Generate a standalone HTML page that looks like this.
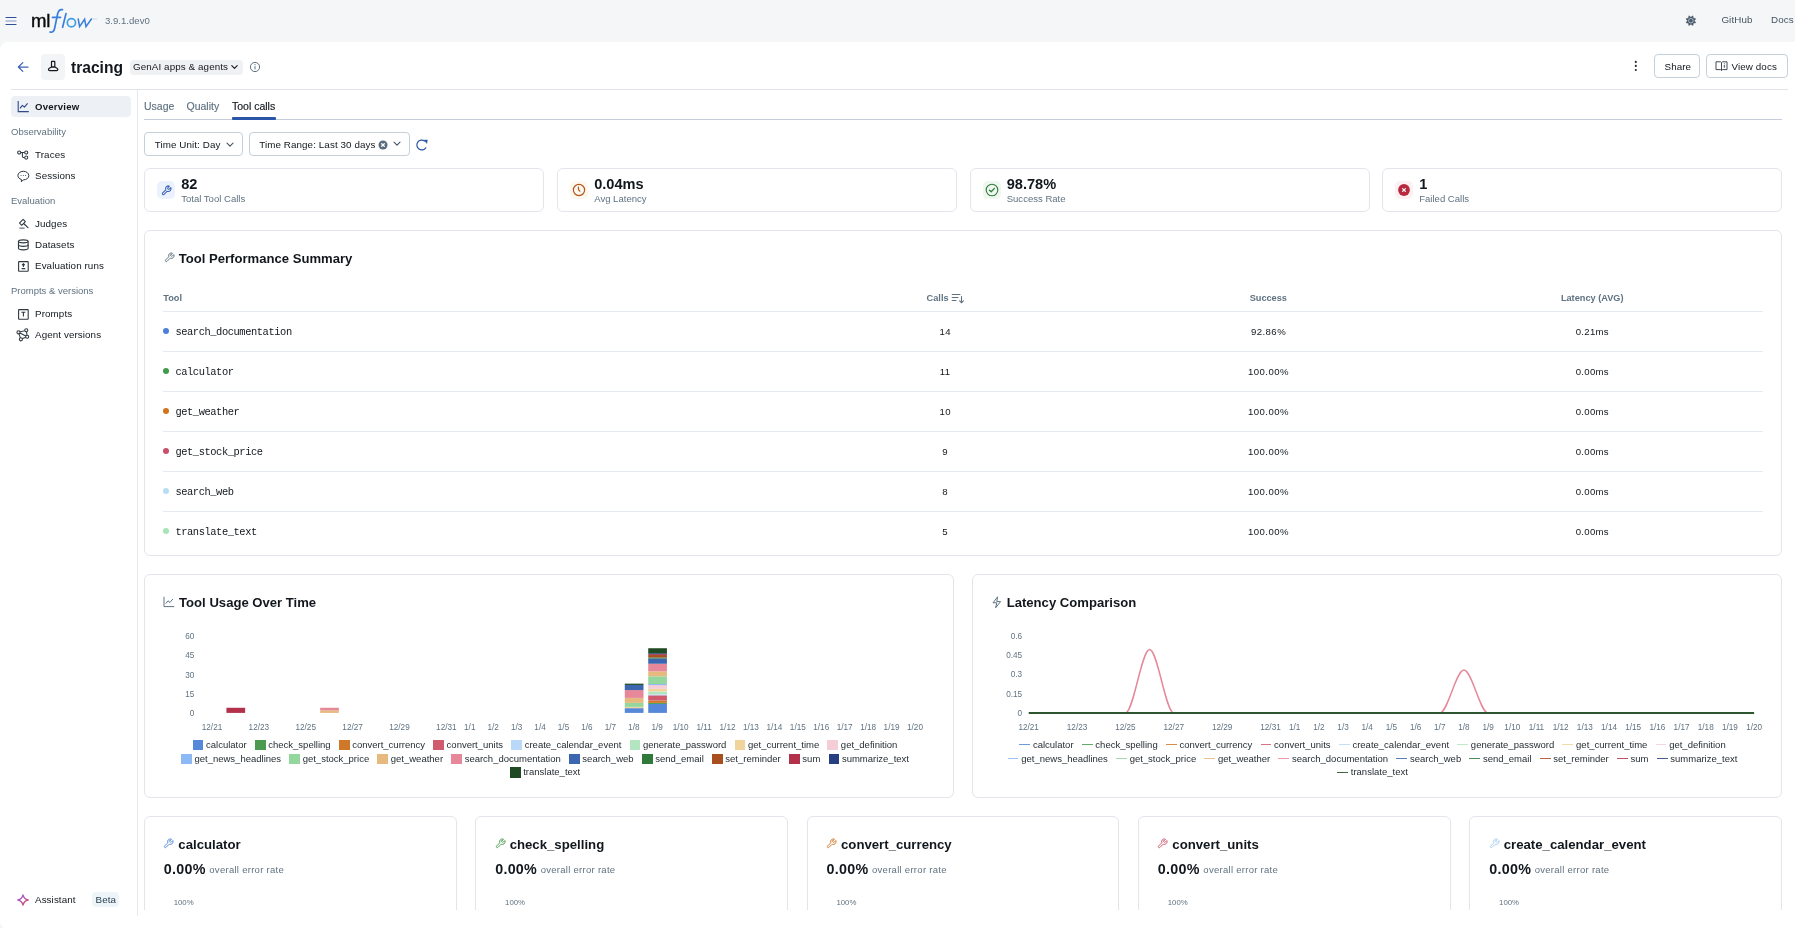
<!DOCTYPE html>
<html><head><meta charset="utf-8">
<style>
*{box-sizing:border-box;margin:0;padding:0}
html,body{width:1795px;height:928px;overflow:hidden}
body{background:#f5f6f8;font-family:"Liberation Sans",sans-serif;color:#11171c}
#root{position:absolute;left:0;top:0;width:1795px;height:928px;background:#f5f6f8;will-change:transform;overflow:hidden}
.a{position:absolute;white-space:nowrap}
svg{position:absolute;overflow:visible}
</style></head><body><div id="root">
<svg style="left:0px;top:0px" width="100" height="42"><g stroke="#2f4f9a" stroke-width="1.2" stroke-linecap="round"><line x1="6" y1="17.5" x2="16" y2="17.5"/><line x1="6" y1="21" x2="16" y2="21" stroke="#8296c6"/><line x1="6" y1="24.5" x2="16" y2="24.5"/></g></svg>
<div class="a" style="left:31.00px;top:8.97px;font-size:18.6px;line-height:24.18px;color:#0b0b0b;letter-spacing:-0.200px;-webkit-text-stroke:0.4px #0b0b0b">ml</div>
<svg style="left:0px;top:0px" width="100" height="42"><g fill="none" stroke="#3a7fdc" stroke-width="1.7" stroke-linecap="round">
<path d="M62.5 9.6 C59.5 9.2 58.2 11 57.6 14 L54.6 28.5 C54 31.5 52.5 32.6 50 32"/>
<line x1="52.5" y1="17.4" x2="60.5" y2="17.4"/>
<line x1="66" y1="13.6" x2="62.6" y2="27.3"/>
<circle cx="71.4" cy="22.8" r="4.1" stroke="#3f9fe6"/>
<path d="M78.2 19 L79.6 26.6 L84.6 19.2 L86 26.6 L91.4 19" stroke-width="1.55"/></g>
<path d="M92.6 19 h2.6 M95.5 19 h1.4" stroke="#9cc" stroke-width="0.6"/></svg>
<div class="a" style="left:105.00px;top:14.73px;font-size:9.6px;line-height:12.48px;color:#5f7281">3.9.1.dev0</div>
<svg style="left:1680px;top:12px" width="22" height="18"><g transform="translate(10.9,8.7)"><path d="M2.03 -4.90 L2.47 -2.47 L4.90 -2.03 L3.50 0.00 L4.90 2.03 L2.47 2.47 L2.03 4.90 L0.00 3.50 L-2.03 4.90 L-2.47 2.47 L-4.90 2.03 L-3.50 0.00 L-4.90 -2.03 L-2.47 -2.47 L-2.03 -4.90 L-0.00 -3.50 Z" fill="#4a5a6b" stroke="#4a5a6b" stroke-width="0.5" stroke-linejoin="round"/><circle r="2.3" fill="none" stroke="#c9d0d8" stroke-width="0.8"/><circle r="1.1" fill="#4a5a6b"/></g></svg>
<div class="a" style="left:1721.40px;top:14.03px;font-size:9.8px;line-height:12.74px;color:#445461;letter-spacing:0.104px">GitHub</div>
<div class="a" style="left:1771.00px;top:14.03px;font-size:9.8px;line-height:12.74px;color:#445461;letter-spacing:0.117px">Docs</div>
<div class="a" style="left:0;top:42px;width:1795px;height:887px;background:#fff;border-radius:8px 0 0 8px"></div>
<svg style="left:17px;top:61px" width="12" height="12"><path d="M11 6 H1.5 M5.8 1.6 L1.4 6 L5.8 10.4" fill="none" stroke="#3d64b0" stroke-width="1.25" stroke-linecap="round" stroke-linejoin="round"/></svg>
<div class="a" style="left:41px;top:54px;width:24px;height:26px;background:#f3f4f6;border-radius:4px"></div>
<svg style="left:44px;top:56px" width="16" height="18"><g fill="none" stroke="#11171c" stroke-width="1.2" stroke-linejoin="round"><rect x="7.5" y="5.3" width="3.3" height="5.7" rx="0.5"/><path d="M7.5 11 L5.3 12.2 C4 12.9 4.2 14.6 5.7 14.6 H12.6 C14.1 14.6 14.3 12.9 13 12.2 L10.8 11 Z"/></g></svg>
<div class="a" style="left:71.20px;top:57.06px;font-size:16.6px;line-height:21.58px;color:#11171c;font-weight:700;transform:scaleX(0.94);transform-origin:0 0">tracing</div>
<div class="a" style="left:130px;top:60px;width:113px;height:15px;background:#f0f1f3;border-radius:4px"></div>
<div class="a" style="left:133.00px;top:60.63px;font-size:9.8px;line-height:12.74px;color:#11171c;letter-spacing:0.102px">GenAI apps &amp; agents</div>
<svg style="left:230px;top:63px" width="10" height="8"><path d="M1.8 2.6 L4.5 5.3 L7.2 2.6" fill="none" stroke="#11171c" stroke-width="1.1" stroke-linecap="round" stroke-linejoin="round"/></svg>
<svg style="left:249px;top:61px" width="12" height="12"><circle cx="6" cy="6" r="4.6" fill="none" stroke="#5f7281" stroke-width="1"/><path d="M6 5.2 V8.4" stroke="#5f7281" stroke-width="1"/><circle cx="6" cy="3.7" r="0.6" fill="#5f7281"/></svg>
<svg style="left:1632px;top:59px" width="8" height="16"><g fill="#1f272d"><circle cx="3.8" cy="2.9" r="1.05"/><circle cx="3.8" cy="6.9" r="1.05"/><circle cx="3.8" cy="11" r="1.05"/></g></svg>
<div class="a" style="left:1654px;top:54.2px;width:46px;height:23.4px;border:1px solid #c4d0da;border-radius:4px;background:#fff"></div>
<div class="a" style="left:1664.50px;top:60.53px;font-size:9.8px;line-height:12.74px;color:#11171c;letter-spacing:0.106px">Share</div>
<div class="a" style="left:1706px;top:54.2px;width:82px;height:23.4px;border:1px solid #c4d0da;border-radius:4px;background:#fff"></div>
<svg style="left:1715px;top:60px" width="14" height="12"><g fill="none" stroke="#2f3941" stroke-width="0.9"><path d="M1 1.8 H5.5 L6.5 2.6 L7.5 1.8 H12 V9.6 H7.5 L6.5 10.4 L5.5 9.6 H1 Z"/><path d="M6.5 2.6 V10.4"/><path d="M9.3 5 V7.8"/></g><circle cx="9.3" cy="3.7" r="0.5" fill="#2f3941"/></svg>
<div class="a" style="left:1731.50px;top:60.53px;font-size:9.8px;line-height:12.74px;color:#11171c;letter-spacing:0.102px">View docs</div>
<div class="a" style="left:11px;top:89px;width:1777px;height:1px;background:#e0e4e9"></div>
<div class="a" style="left:137px;top:90px;width:1px;height:826px;background:#e4e9ef"></div>
<div class="a" style="left:11px;top:96px;width:120px;height:21px;background:#edf1f6;border-radius:4px"></div>
<svg style="left:17px;top:100px" width="13" height="13"><path d="M1.2 1 V11.6 H11.8" fill="none" stroke="#2f4a8a" stroke-width="1.1"/><path d="M3 8.4 L5.4 5.4 L7.4 7.2 L10.6 3.4" fill="none" stroke="#2f4a8a" stroke-width="1.1" stroke-linejoin="round"/></svg>
<div class="a" style="left:35.00px;top:100.63px;font-size:9.6px;line-height:12.48px;color:#11171c;font-weight:700;letter-spacing:0.227px">Overview</div>
<div class="a" style="left:11.00px;top:126.23px;font-size:9.5px;line-height:12.35px;color:#5f7281">Observability</div>
<div class="a" style="left:11.00px;top:195.13px;font-size:9.5px;line-height:12.35px;color:#5f7281">Evaluation</div>
<div class="a" style="left:11.00px;top:285.33px;font-size:9.5px;line-height:12.35px;color:#5f7281">Prompts &amp; versions</div>
<div class="a" style="left:35.00px;top:149.03px;font-size:9.8px;line-height:12.74px;color:#11171c;letter-spacing:0.104px">Traces</div>
<div class="a" style="left:35.00px;top:170.23px;font-size:9.8px;line-height:12.74px;color:#11171c;letter-spacing:0.102px">Sessions</div>
<div class="a" style="left:35.00px;top:218.23px;font-size:9.8px;line-height:12.74px;color:#11171c;letter-spacing:0.109px">Judges</div>
<div class="a" style="left:35.00px;top:239.23px;font-size:9.8px;line-height:12.74px;color:#11171c;letter-spacing:0.100px">Datasets</div>
<div class="a" style="left:35.00px;top:260.23px;font-size:9.8px;line-height:12.74px;color:#11171c;letter-spacing:0.094px">Evaluation runs</div>
<div class="a" style="left:35.00px;top:308.23px;font-size:9.8px;line-height:12.74px;color:#11171c;letter-spacing:0.107px">Prompts</div>
<div class="a" style="left:35.00px;top:329.23px;font-size:9.8px;line-height:12.74px;color:#11171c;letter-spacing:0.096px">Agent versions</div>
<svg style="left:16px;top:148px" width="14" height="13"><g fill="none" stroke="#2f3941" stroke-width="1.05"><circle cx="3.2" cy="4.5" r="1.55"/><circle cx="10.2" cy="4.5" r="1.55"/><circle cx="10.2" cy="9.6" r="1.55"/><path d="M4.8 4.5 H8.6 M6.4 4.5 V8.4 Q6.4 9.6 8.6 9.6"/></g></svg>
<svg style="left:17px;top:170px" width="13" height="13"><path d="M6.3 1.3 C9.5 1.3 11.8 3.2 11.8 5.6 C11.8 8 9.5 9.9 6.3 9.9 L4.4 11.8 V9.5 C2.3 8.8 0.9 7.4 0.9 5.6 C0.9 3.2 3.2 1.3 6.3 1.3 Z" fill="none" stroke="#2f3941" stroke-width="1"/><g fill="#2f3941"><circle cx="4" cy="5.6" r="0.5"/><circle cx="6.3" cy="5.6" r="0.5"/><circle cx="8.6" cy="5.6" r="0.5"/></g></svg>
<svg style="left:12px;top:215px" width="22" height="18"><g fill="none" stroke="#2f3941" stroke-linecap="round"><path d="M11.6 8.5 L16 12.6" stroke-width="1.15"/><rect x="-2.6" y="-1.6" width="5.2" height="3.2" rx="0.3" transform="translate(10.4 7.3) rotate(-45)" stroke-width="1.1"/><path d="M7.4 13.2 H12.6" stroke="#8a96a3" stroke-width="1.7" stroke-linecap="butt"/></g></svg>
<svg style="left:17px;top:238px" width="13" height="13"><g fill="none" stroke="#2f3941" stroke-width="1.15"><ellipse cx="6.3" cy="3.3" rx="4.8" ry="1.5"/><path d="M1.5 3.3 V10.3 C1.5 11.2 3.7 11.8 6.3 11.8 C8.9 11.8 11.1 11.2 11.1 10.3 V3.3"/><path d="M1.5 6.8 C1.5 7.7 3.7 8.3 6.3 8.3 C8.9 8.3 11.1 7.7 11.1 6.8"/></g></svg>
<svg style="left:17px;top:260px" width="13" height="13"><g fill="none" stroke="#2f3941" stroke-width="1.1"><rect x="1.6" y="1.6" width="9.6" height="9.6" rx="0.4"/><path d="M6.4 3.8 V6.9 M5 5.1 L6.4 3.8 L7.8 5.1 M4.6 8.6 H8.2"/></g></svg>
<svg style="left:17px;top:307.5px" width="13" height="13"><g fill="none" stroke="#2f3941" stroke-width="1.1"><rect x="1.6" y="1.6" width="9.6" height="9.6" rx="0.4"/><path d="M4.4 4.3 H8.4 M6.4 4.3 V8.6"/></g></svg>
<svg style="left:12px;top:322px" width="22" height="24"><g stroke="#2f3941" stroke-width="1.05"><path d="M6.5 10.3 L14.3 8.3 L15.2 14.7 L8.9 17.3 Z M6.5 10.3 L15.2 14.7" fill="none"/><g fill="#fff"><circle cx="6.5" cy="10.3" r="1.55"/><circle cx="14.3" cy="8.3" r="1.55"/><circle cx="15.2" cy="14.7" r="1.55"/><circle cx="8.9" cy="17.3" r="1.55"/></g></g></svg>
<svg style="left:17px;top:894px" width="12" height="12"><defs><linearGradient id="ag" x1="0" y1="0" x2="1" y2="1"><stop offset="0" stop-color="#8b5cf6"/><stop offset="1" stop-color="#e5484d"/></linearGradient></defs><path d="M6 0.8 Q6.9 5.1 11.2 6 Q6.9 6.9 6 11.2 Q5.1 6.9 0.8 6 Q5.1 5.1 6 0.8 Z" fill="none" stroke="url(#ag)" stroke-width="1.3" stroke-linejoin="round"/></svg>
<div class="a" style="left:35.00px;top:893.63px;font-size:9.8px;line-height:12.74px;color:#11171c;letter-spacing:0.092px">Assistant</div>
<div class="a" style="left:92px;top:892px;width:27px;height:15px;background:#eef5f9;border-radius:4px"></div>
<div class="a" style="left:95.60px;top:893.63px;font-size:9.8px;line-height:12.74px;color:#1f3a4d;letter-spacing:0.105px">Beta</div>
<div class="a" style="left:144px;top:119px;width:1638px;height:1px;background:#c5ced8"></div>
<div class="a" style="left:232px;top:117px;width:44px;height:2.5px;background:#2a55a8;border-radius:1px"></div>
<div class="a" style="left:144.00px;top:100.44px;font-size:10.5px;line-height:13.65px;color:#5f7281;-webkit-text-stroke:0.15px #5f7281">Usage</div>
<div class="a" style="left:186.50px;top:100.44px;font-size:10.5px;line-height:13.65px;color:#5f7281;-webkit-text-stroke:0.15px #5f7281">Quality</div>
<div class="a" style="left:232.00px;top:100.44px;font-size:10.5px;line-height:13.65px;color:#11171c;-webkit-text-stroke:0.15px #11171c">Tool calls</div>
<div class="a" style="left:144px;top:132px;width:99px;height:24px;border:1px solid #c4d0da;border-radius:4px;background:#fff"></div>
<div class="a" style="left:154.70px;top:138.63px;font-size:9.8px;line-height:12.74px;color:#11171c;letter-spacing:0.096px">Time Unit: Day</div>
<svg style="left:226px;top:141.5px" width="8" height="6"><path d="M1 1.2 L4 4.2 L7 1.2" fill="none" stroke="#445461" stroke-width="1.1" stroke-linecap="round" stroke-linejoin="round"/></svg>
<div class="a" style="left:249px;top:132px;width:161px;height:24px;border:1px solid #c4d0da;border-radius:4px;background:#fff"></div>
<div class="a" style="left:259.20px;top:138.63px;font-size:9.8px;line-height:12.74px;color:#11171c;letter-spacing:0.098px">Time Range: Last 30 days</div>
<svg style="left:378.4px;top:139.8px" width="10" height="10"><circle cx="5" cy="5" r="4.5" fill="#5a6b7c"/><path d="M3.7 3.7 L6.3 6.3 M6.3 3.7 L3.7 6.3" stroke="#fff" stroke-width="1.3" stroke-linecap="round"/></svg>
<svg style="left:393px;top:141.1px" width="8" height="6"><path d="M1 1.2 L4 4.2 L7 1.2" fill="none" stroke="#445461" stroke-width="1.1" stroke-linecap="round" stroke-linejoin="round"/></svg>
<svg style="left:416px;top:138.8px" width="14" height="12"><path d="M9.8 8.8 A4.9 4.9 0 1 1 8.6 2.0" fill="none" stroke="#2a55a8" stroke-width="1.2" stroke-linecap="round"/><path d="M7.9 1.1 L11.4 0.9 L10.9 4.5 Z" fill="#2a55a8" stroke="#2a55a8" stroke-width="0.4" stroke-linejoin="round"/></svg>
<div class="a" style="left:144px;top:168px;width:400px;height:44px;border:1px solid #e2e6ec;border-radius:6px;background:#fff"></div>
<div class="a" style="left:157px;top:181px;width:18px;height:18px;background:#ecf2fd;border-radius:5px"></div>
<svg style="left:160.6px;top:184.6px" width="11" height="11" viewBox="0 0 24 24"><path d="M14.7 6.3a1 1 0 0 0 0 1.4l1.6 1.6a1 1 0 0 0 1.4 0l3.77-3.77a6 6 0 0 1-7.94 7.94l-6.91 6.91a2.12 2.12 0 0 1-3-3l6.91-6.91a6 6 0 0 1 7.94-7.94l-3.76 3.76z" fill="none" stroke="#3a62b4" stroke-width="2.2" stroke-linecap="round" stroke-linejoin="round"/></svg>
<div class="a" style="left:181.20px;top:175.45px;font-size:14.6px;line-height:18.98px;color:#11171c;font-weight:700">82</div>
<div class="a" style="left:181.20px;top:193.08px;font-size:9.55px;line-height:12.42px;color:#5f7281">Total Tool Calls</div>
<div class="a" style="left:557px;top:168px;width:400px;height:44px;border:1px solid #e2e6ec;border-radius:6px;background:#fff"></div>
<div class="a" style="left:570px;top:181px;width:18px;height:18px;background:#fdf8ed;border-radius:5px"></div>
<svg style="left:570px;top:181px" width="18" height="18"><circle cx="9" cy="9" r="5.6" fill="none" stroke="#b6551f" stroke-width="1.2"/><path d="M8.4 6.2 L8.6 8.8 L9.8 10.2" fill="none" stroke="#b6551f" stroke-width="1.2" stroke-linecap="round"/></svg>
<div class="a" style="left:594.20px;top:175.45px;font-size:14.6px;line-height:18.98px;color:#11171c;font-weight:700">0.04ms</div>
<div class="a" style="left:594.20px;top:193.08px;font-size:9.55px;line-height:12.42px;color:#5f7281">Avg Latency</div>
<div class="a" style="left:969.5px;top:168px;width:400px;height:44px;border:1px solid #e2e6ec;border-radius:6px;background:#fff"></div>
<div class="a" style="left:982.5px;top:181px;width:18px;height:18px;background:#f0f7f1;border-radius:5px"></div>
<svg style="left:982.5px;top:181px" width="18" height="18"><circle cx="9" cy="9" r="5.8" fill="none" stroke="#2f7d3b" stroke-width="1.1"/><path d="M6.5 9.2 L8.2 10.8 L11.4 7.4" fill="none" stroke="#2f7d3b" stroke-width="1.3" stroke-linecap="round" stroke-linejoin="round"/></svg>
<div class="a" style="left:1006.70px;top:175.45px;font-size:14.6px;line-height:18.98px;color:#11171c;font-weight:700">98.78%</div>
<div class="a" style="left:1006.70px;top:193.08px;font-size:9.55px;line-height:12.42px;color:#5f7281">Success Rate</div>
<div class="a" style="left:1382px;top:168px;width:400px;height:44px;border:1px solid #e2e6ec;border-radius:6px;background:#fff"></div>
<div class="a" style="left:1395px;top:181px;width:18px;height:18px;background:#fdf0f2;border-radius:5px"></div>
<svg style="left:1395px;top:181px" width="18" height="18"><circle cx="9" cy="9" r="5.9" fill="#b8293f"/><path d="M7.6 7.6 L10.4 10.4 M10.4 7.6 L7.6 10.4" stroke="#fff" stroke-width="1.2" stroke-linecap="round"/></svg>
<div class="a" style="left:1419.20px;top:175.45px;font-size:14.6px;line-height:18.98px;color:#11171c;font-weight:700">1</div>
<div class="a" style="left:1419.20px;top:193.08px;font-size:9.55px;line-height:12.42px;color:#5f7281">Failed Calls</div>
<div class="a" style="left:144px;top:230px;width:1638px;height:325.5px;border:1px solid #e2e6ec;border-radius:6px;background:#fff"></div>
<svg style="left:163.5px;top:252px" width="11" height="11" viewBox="0 0 24 24"><path d="M14.7 6.3a1 1 0 0 0 0 1.4l1.6 1.6a1 1 0 0 0 1.4 0l3.77-3.77a6 6 0 0 1-7.94 7.94l-6.91 6.91a2.12 2.12 0 0 1-3-3l6.91-6.91a6 6 0 0 1 7.94-7.94l-3.76 3.76z" fill="none" stroke="#5f7281" stroke-width="2.1" stroke-linecap="round" stroke-linejoin="round"/></svg>
<div class="a" style="left:178.70px;top:250.15px;font-size:13.1px;line-height:17.03px;color:#11171c;font-weight:700">Tool Performance Summary</div>
<div class="a" style="left:163.30px;top:292.63px;font-size:9.2px;line-height:11.96px;color:#5f7281;font-weight:700">Tool</div>
<div class="a" style="left:926.60px;top:292.63px;font-size:9.2px;line-height:11.96px;color:#5f7281;font-weight:700">Calls</div>
<svg style="left:950.5px;top:292.5px" width="14" height="11"><g fill="none" stroke="#5f7281" stroke-width="1.1" stroke-linecap="round"><path d="M1.2 1.5 H9 M1.2 4.5 H7 M1.2 7.5 H5"/><path d="M10.5 3.6 V9.8 M8.6 7.8 L10.5 9.8 L12.4 7.8"/></g></svg>
<div class="a" style="left:1218.30px;top:292.63px;font-size:9.2px;line-height:11.96px;color:#5f7281;font-weight:700;width:100px;text-align:center">Success</div>
<div class="a" style="left:1542.20px;top:292.63px;font-size:9.2px;line-height:11.96px;color:#5f7281;font-weight:700;width:100px;text-align:center">Latency (AVG)</div>
<div class="a" style="left:163px;top:311px;width:1600px;height:1px;background:#e4e9ef"></div>
<div class="a" style="left:163px;top:328px;width:6px;height:6px;background:#4e7fd8;border-radius:50%"></div>
<div class="a" style="left:175.40px;top:325.57px;font-size:10.4px;line-height:13.52px;color:#11171c;font-family:'Liberation Mono',monospace;letter-spacing:-0.420px">search_documentation</div>
<div class="a" style="left:905.20px;top:325.73px;font-size:9.6px;line-height:12.48px;color:#11171c;letter-spacing:0.400px;width:80px;text-align:center">14</div>
<div class="a" style="left:1228.52px;top:325.73px;font-size:9.6px;line-height:12.48px;color:#11171c;letter-spacing:0.450px;width:80px;text-align:center">92.86%</div>
<div class="a" style="left:1552.35px;top:325.73px;font-size:9.6px;line-height:12.48px;color:#11171c;letter-spacing:0.300px;width:80px;text-align:center">0.21ms</div>
<div class="a" style="left:163px;top:351px;width:1600px;height:1px;background:#e4e9ef"></div>
<div class="a" style="left:163px;top:368px;width:6px;height:6px;background:#3f9a4a;border-radius:50%"></div>
<div class="a" style="left:175.40px;top:365.57px;font-size:10.4px;line-height:13.52px;color:#11171c;font-family:'Liberation Mono',monospace;letter-spacing:-0.420px">calculator</div>
<div class="a" style="left:905.20px;top:365.73px;font-size:9.6px;line-height:12.48px;color:#11171c;letter-spacing:0.400px;width:80px;text-align:center">11</div>
<div class="a" style="left:1228.52px;top:365.73px;font-size:9.6px;line-height:12.48px;color:#11171c;letter-spacing:0.450px;width:80px;text-align:center">100.00%</div>
<div class="a" style="left:1552.35px;top:365.73px;font-size:9.6px;line-height:12.48px;color:#11171c;letter-spacing:0.300px;width:80px;text-align:center">0.00ms</div>
<div class="a" style="left:163px;top:391px;width:1600px;height:1px;background:#e4e9ef"></div>
<div class="a" style="left:163px;top:408px;width:6px;height:6px;background:#d2731f;border-radius:50%"></div>
<div class="a" style="left:175.40px;top:405.57px;font-size:10.4px;line-height:13.52px;color:#11171c;font-family:'Liberation Mono',monospace;letter-spacing:-0.420px">get_weather</div>
<div class="a" style="left:905.20px;top:405.73px;font-size:9.6px;line-height:12.48px;color:#11171c;letter-spacing:0.400px;width:80px;text-align:center">10</div>
<div class="a" style="left:1228.52px;top:405.73px;font-size:9.6px;line-height:12.48px;color:#11171c;letter-spacing:0.450px;width:80px;text-align:center">100.00%</div>
<div class="a" style="left:1552.35px;top:405.73px;font-size:9.6px;line-height:12.48px;color:#11171c;letter-spacing:0.300px;width:80px;text-align:center">0.00ms</div>
<div class="a" style="left:163px;top:431px;width:1600px;height:1px;background:#e4e9ef"></div>
<div class="a" style="left:163px;top:448px;width:6px;height:6px;background:#c8506a;border-radius:50%"></div>
<div class="a" style="left:175.40px;top:445.57px;font-size:10.4px;line-height:13.52px;color:#11171c;font-family:'Liberation Mono',monospace;letter-spacing:-0.420px">get_stock_price</div>
<div class="a" style="left:905.20px;top:445.73px;font-size:9.6px;line-height:12.48px;color:#11171c;letter-spacing:0.400px;width:80px;text-align:center">9</div>
<div class="a" style="left:1228.52px;top:445.73px;font-size:9.6px;line-height:12.48px;color:#11171c;letter-spacing:0.450px;width:80px;text-align:center">100.00%</div>
<div class="a" style="left:1552.35px;top:445.73px;font-size:9.6px;line-height:12.48px;color:#11171c;letter-spacing:0.300px;width:80px;text-align:center">0.00ms</div>
<div class="a" style="left:163px;top:471px;width:1600px;height:1px;background:#e4e9ef"></div>
<div class="a" style="left:163px;top:488px;width:6px;height:6px;background:#b9dcf5;border-radius:50%"></div>
<div class="a" style="left:175.40px;top:485.57px;font-size:10.4px;line-height:13.52px;color:#11171c;font-family:'Liberation Mono',monospace;letter-spacing:-0.420px">search_web</div>
<div class="a" style="left:905.20px;top:485.73px;font-size:9.6px;line-height:12.48px;color:#11171c;letter-spacing:0.400px;width:80px;text-align:center">8</div>
<div class="a" style="left:1228.52px;top:485.73px;font-size:9.6px;line-height:12.48px;color:#11171c;letter-spacing:0.450px;width:80px;text-align:center">100.00%</div>
<div class="a" style="left:1552.35px;top:485.73px;font-size:9.6px;line-height:12.48px;color:#11171c;letter-spacing:0.300px;width:80px;text-align:center">0.00ms</div>
<div class="a" style="left:163px;top:511px;width:1600px;height:1px;background:#e4e9ef"></div>
<div class="a" style="left:163px;top:528px;width:6px;height:6px;background:#a9e3b8;border-radius:50%"></div>
<div class="a" style="left:175.40px;top:525.57px;font-size:10.4px;line-height:13.52px;color:#11171c;font-family:'Liberation Mono',monospace;letter-spacing:-0.420px">translate_text</div>
<div class="a" style="left:905.20px;top:525.73px;font-size:9.6px;line-height:12.48px;color:#11171c;letter-spacing:0.400px;width:80px;text-align:center">5</div>
<div class="a" style="left:1228.52px;top:525.73px;font-size:9.6px;line-height:12.48px;color:#11171c;letter-spacing:0.450px;width:80px;text-align:center">100.00%</div>
<div class="a" style="left:1552.35px;top:525.73px;font-size:9.6px;line-height:12.48px;color:#11171c;letter-spacing:0.300px;width:80px;text-align:center">0.00ms</div>
<div class="a" style="left:144px;top:574px;width:809.5px;height:223.5px;border:1px solid #e2e6ec;border-radius:6px;background:#fff"></div>
<svg style="left:163px;top:596px" width="12" height="12"><path d="M1 0.8 V10.6 H11.2" fill="none" stroke="#5f7281" stroke-width="1"/><path d="M2.8 7.6 L5 4.8 L6.9 6.5 L9.9 3" fill="none" stroke="#5f7281" stroke-width="1" stroke-linejoin="round"/></svg>
<div class="a" style="left:179.10px;top:593.95px;font-size:13.1px;line-height:17.03px;color:#11171c;font-weight:700">Tool Usage Over Time</div>
<div class="a" style="left:164.30px;top:632.13px;font-size:8.2px;line-height:10.66px;color:#5f7281;width:30px;text-align:right">60</div>
<div class="a" style="left:164.30px;top:651.43px;font-size:8.2px;line-height:10.66px;color:#5f7281;width:30px;text-align:right">45</div>
<div class="a" style="left:164.30px;top:670.73px;font-size:8.2px;line-height:10.66px;color:#5f7281;width:30px;text-align:right">30</div>
<div class="a" style="left:164.30px;top:690.13px;font-size:8.2px;line-height:10.66px;color:#5f7281;width:30px;text-align:right">15</div>
<div class="a" style="left:164.30px;top:709.43px;font-size:8.2px;line-height:10.66px;color:#5f7281;width:30px;text-align:right">0</div>
<div class="a" style="left:192.00px;top:723.33px;font-size:8.2px;line-height:10.66px;color:#5f7281;width:40px;text-align:center">12/21</div>
<div class="a" style="left:238.87px;top:723.33px;font-size:8.2px;line-height:10.66px;color:#5f7281;width:40px;text-align:center">12/23</div>
<div class="a" style="left:285.73px;top:723.33px;font-size:8.2px;line-height:10.66px;color:#5f7281;width:40px;text-align:center">12/25</div>
<div class="a" style="left:332.60px;top:723.33px;font-size:8.2px;line-height:10.66px;color:#5f7281;width:40px;text-align:center">12/27</div>
<div class="a" style="left:379.46px;top:723.33px;font-size:8.2px;line-height:10.66px;color:#5f7281;width:40px;text-align:center">12/29</div>
<div class="a" style="left:426.33px;top:723.33px;font-size:8.2px;line-height:10.66px;color:#5f7281;width:40px;text-align:center">12/31</div>
<div class="a" style="left:449.76px;top:723.33px;font-size:8.2px;line-height:10.66px;color:#5f7281;width:40px;text-align:center">1/1</div>
<div class="a" style="left:473.20px;top:723.33px;font-size:8.2px;line-height:10.66px;color:#5f7281;width:40px;text-align:center">1/2</div>
<div class="a" style="left:496.63px;top:723.33px;font-size:8.2px;line-height:10.66px;color:#5f7281;width:40px;text-align:center">1/3</div>
<div class="a" style="left:520.06px;top:723.33px;font-size:8.2px;line-height:10.66px;color:#5f7281;width:40px;text-align:center">1/4</div>
<div class="a" style="left:543.50px;top:723.33px;font-size:8.2px;line-height:10.66px;color:#5f7281;width:40px;text-align:center">1/5</div>
<div class="a" style="left:566.93px;top:723.33px;font-size:8.2px;line-height:10.66px;color:#5f7281;width:40px;text-align:center">1/6</div>
<div class="a" style="left:590.36px;top:723.33px;font-size:8.2px;line-height:10.66px;color:#5f7281;width:40px;text-align:center">1/7</div>
<div class="a" style="left:613.79px;top:723.33px;font-size:8.2px;line-height:10.66px;color:#5f7281;width:40px;text-align:center">1/8</div>
<div class="a" style="left:637.23px;top:723.33px;font-size:8.2px;line-height:10.66px;color:#5f7281;width:40px;text-align:center">1/9</div>
<div class="a" style="left:660.66px;top:723.33px;font-size:8.2px;line-height:10.66px;color:#5f7281;width:40px;text-align:center">1/10</div>
<div class="a" style="left:684.09px;top:723.33px;font-size:8.2px;line-height:10.66px;color:#5f7281;width:40px;text-align:center">1/11</div>
<div class="a" style="left:707.53px;top:723.33px;font-size:8.2px;line-height:10.66px;color:#5f7281;width:40px;text-align:center">1/12</div>
<div class="a" style="left:730.96px;top:723.33px;font-size:8.2px;line-height:10.66px;color:#5f7281;width:40px;text-align:center">1/13</div>
<div class="a" style="left:754.39px;top:723.33px;font-size:8.2px;line-height:10.66px;color:#5f7281;width:40px;text-align:center">1/14</div>
<div class="a" style="left:777.83px;top:723.33px;font-size:8.2px;line-height:10.66px;color:#5f7281;width:40px;text-align:center">1/15</div>
<div class="a" style="left:801.26px;top:723.33px;font-size:8.2px;line-height:10.66px;color:#5f7281;width:40px;text-align:center">1/16</div>
<div class="a" style="left:824.69px;top:723.33px;font-size:8.2px;line-height:10.66px;color:#5f7281;width:40px;text-align:center">1/17</div>
<div class="a" style="left:848.12px;top:723.33px;font-size:8.2px;line-height:10.66px;color:#5f7281;width:40px;text-align:center">1/18</div>
<div class="a" style="left:871.56px;top:723.33px;font-size:8.2px;line-height:10.66px;color:#5f7281;width:40px;text-align:center">1/19</div>
<div class="a" style="left:894.99px;top:723.33px;font-size:8.2px;line-height:10.66px;color:#5f7281;width:40px;text-align:center">1/20</div>
<svg style="left:0px;top:0px" width="1795" height="928"><rect x="226.43" y="707.77" width="18.7" height="5.13" fill="#b3314a"/><rect x="320.16" y="710.33" width="18.7" height="2.57" fill="#e6b97e"/><rect x="320.16" y="707.77" width="18.7" height="2.57" fill="#e6889a"/><rect x="624.79" y="708.15" width="18.7" height="4.75" fill="#5688d9"/><rect x="624.79" y="706.87" width="18.7" height="1.28" fill="#f1d49b"/><rect x="624.79" y="702.89" width="18.7" height="3.98" fill="#93d69e"/><rect x="624.79" y="697.89" width="18.7" height="5.00" fill="#e6b97e"/><rect x="624.79" y="690.06" width="18.7" height="7.83" fill="#e6889a"/><rect x="624.79" y="684.93" width="18.7" height="5.13" fill="#3d66b0"/><rect x="624.79" y="683.65" width="18.7" height="1.28" fill="#1f4a24"/><rect x="648.23" y="703.92" width="18.7" height="8.98" fill="#5688d9"/><rect x="648.23" y="702.89" width="18.7" height="1.03" fill="#4a9a50"/><rect x="648.23" y="700.45" width="18.7" height="2.44" fill="#d0782a"/><rect x="648.23" y="695.32" width="18.7" height="5.13" fill="#d05a6e"/><rect x="648.23" y="694.30" width="18.7" height="1.03" fill="#bad8f7"/><rect x="648.23" y="691.47" width="18.7" height="2.82" fill="#b3e6c0"/><rect x="648.23" y="688.91" width="18.7" height="2.57" fill="#f1d49b"/><rect x="648.23" y="685.06" width="18.7" height="3.85" fill="#f5cdd6"/><rect x="648.23" y="684.03" width="18.7" height="1.03" fill="#8cb8f5"/><rect x="648.23" y="676.33" width="18.7" height="7.70" fill="#93d69e"/><rect x="648.23" y="671.33" width="18.7" height="5.00" fill="#e6b97e"/><rect x="648.23" y="663.76" width="18.7" height="7.57" fill="#e6889a"/><rect x="648.23" y="658.50" width="18.7" height="5.26" fill="#3d66b0"/><rect x="648.23" y="657.47" width="18.7" height="1.03" fill="#2f7a3a"/><rect x="648.23" y="655.04" width="18.7" height="2.44" fill="#a94e1f"/><rect x="648.23" y="654.14" width="18.7" height="0.90" fill="#b3314a"/><rect x="648.23" y="653.24" width="18.7" height="0.90" fill="#273f80"/><rect x="648.23" y="648.24" width="18.7" height="5.00" fill="#1f4a24"/></svg>
<div class="a" style="left:145.00px;top:738.53px;font-size:9.5px;line-height:12.35px;color:#1f272d;width:800px;text-align:center"><span style="margin:0 4.1px"><span style="display:inline-block;width:10.8px;height:10.6px;background:#5688d9;margin-right:2.6px;vertical-align:-2.6px"></span>calculator</span><span style="margin:0 4.1px"><span style="display:inline-block;width:10.8px;height:10.6px;background:#4a9a50;margin-right:2.6px;vertical-align:-2.6px"></span>check_spelling</span><span style="margin:0 4.1px"><span style="display:inline-block;width:10.8px;height:10.6px;background:#d0782a;margin-right:2.6px;vertical-align:-2.6px"></span>convert_currency</span><span style="margin:0 4.1px"><span style="display:inline-block;width:10.8px;height:10.6px;background:#d05a6e;margin-right:2.6px;vertical-align:-2.6px"></span>convert_units</span><span style="margin:0 4.1px"><span style="display:inline-block;width:10.8px;height:10.6px;background:#bad8f7;margin-right:2.6px;vertical-align:-2.6px"></span>create_calendar_event</span><span style="margin:0 4.1px"><span style="display:inline-block;width:10.8px;height:10.6px;background:#b3e6c0;margin-right:2.6px;vertical-align:-2.6px"></span>generate_password</span><span style="margin:0 4.1px"><span style="display:inline-block;width:10.8px;height:10.6px;background:#f1d49b;margin-right:2.6px;vertical-align:-2.6px"></span>get_current_time</span><span style="margin:0 4.1px"><span style="display:inline-block;width:10.8px;height:10.6px;background:#f5cdd6;margin-right:2.6px;vertical-align:-2.6px"></span>get_definition</span></div>
<div class="a" style="left:145.00px;top:752.53px;font-size:9.5px;line-height:12.35px;color:#1f272d;width:800px;text-align:center"><span style="margin:0 4.1px"><span style="display:inline-block;width:10.8px;height:10.6px;background:#8cb8f5;margin-right:2.6px;vertical-align:-2.6px"></span>get_news_headlines</span><span style="margin:0 4.1px"><span style="display:inline-block;width:10.8px;height:10.6px;background:#93d69e;margin-right:2.6px;vertical-align:-2.6px"></span>get_stock_price</span><span style="margin:0 4.1px"><span style="display:inline-block;width:10.8px;height:10.6px;background:#e6b97e;margin-right:2.6px;vertical-align:-2.6px"></span>get_weather</span><span style="margin:0 4.1px"><span style="display:inline-block;width:10.8px;height:10.6px;background:#e6889a;margin-right:2.6px;vertical-align:-2.6px"></span>search_documentation</span><span style="margin:0 4.1px"><span style="display:inline-block;width:10.8px;height:10.6px;background:#3d66b0;margin-right:2.6px;vertical-align:-2.6px"></span>search_web</span><span style="margin:0 4.1px"><span style="display:inline-block;width:10.8px;height:10.6px;background:#2f7a3a;margin-right:2.6px;vertical-align:-2.6px"></span>send_email</span><span style="margin:0 4.1px"><span style="display:inline-block;width:10.8px;height:10.6px;background:#a94e1f;margin-right:2.6px;vertical-align:-2.6px"></span>set_reminder</span><span style="margin:0 4.1px"><span style="display:inline-block;width:10.8px;height:10.6px;background:#b3314a;margin-right:2.6px;vertical-align:-2.6px"></span>sum</span><span style="margin:0 4.1px"><span style="display:inline-block;width:10.8px;height:10.6px;background:#273f80;margin-right:2.6px;vertical-align:-2.6px"></span>summarize_text</span></div>
<div class="a" style="left:145.00px;top:766.33px;font-size:9.5px;line-height:12.35px;color:#1f272d;width:800px;text-align:center"><span style="margin:0 4.1px"><span style="display:inline-block;width:10.8px;height:10.6px;background:#1f4a24;margin-right:2.6px;vertical-align:-2.6px"></span>translate_text</span></div>
<div class="a" style="left:972px;top:574px;width:810px;height:223.5px;border:1px solid #e2e6ec;border-radius:6px;background:#fff"></div>
<svg style="left:991px;top:596px" width="12" height="13"><path d="M6.6 0.8 L2 6.8 H5.8 L4.6 11.8 L9.6 5.6 H5.8 Z" fill="none" stroke="#5f7281" stroke-width="1" stroke-linejoin="round"/></svg>
<div class="a" style="left:1006.70px;top:593.95px;font-size:13.1px;line-height:17.03px;color:#11171c;font-weight:700">Latency Comparison</div>
<div class="a" style="left:992.10px;top:632.13px;font-size:8.2px;line-height:10.66px;color:#5f7281;width:30px;text-align:right">0.6</div>
<div class="a" style="left:992.10px;top:651.23px;font-size:8.2px;line-height:10.66px;color:#5f7281;width:30px;text-align:right">0.45</div>
<div class="a" style="left:992.10px;top:670.43px;font-size:8.2px;line-height:10.66px;color:#5f7281;width:30px;text-align:right">0.3</div>
<div class="a" style="left:992.10px;top:689.73px;font-size:8.2px;line-height:10.66px;color:#5f7281;width:30px;text-align:right">0.15</div>
<div class="a" style="left:992.10px;top:708.93px;font-size:8.2px;line-height:10.66px;color:#5f7281;width:30px;text-align:right">0</div>
<div class="a" style="left:1008.70px;top:723.33px;font-size:8.2px;line-height:10.66px;color:#5f7281;width:40px;text-align:center">12/21</div>
<div class="a" style="left:1057.06px;top:723.33px;font-size:8.2px;line-height:10.66px;color:#5f7281;width:40px;text-align:center">12/23</div>
<div class="a" style="left:1105.42px;top:723.33px;font-size:8.2px;line-height:10.66px;color:#5f7281;width:40px;text-align:center">12/25</div>
<div class="a" style="left:1153.78px;top:723.33px;font-size:8.2px;line-height:10.66px;color:#5f7281;width:40px;text-align:center">12/27</div>
<div class="a" style="left:1202.14px;top:723.33px;font-size:8.2px;line-height:10.66px;color:#5f7281;width:40px;text-align:center">12/29</div>
<div class="a" style="left:1250.50px;top:723.33px;font-size:8.2px;line-height:10.66px;color:#5f7281;width:40px;text-align:center">12/31</div>
<div class="a" style="left:1274.68px;top:723.33px;font-size:8.2px;line-height:10.66px;color:#5f7281;width:40px;text-align:center">1/1</div>
<div class="a" style="left:1298.86px;top:723.33px;font-size:8.2px;line-height:10.66px;color:#5f7281;width:40px;text-align:center">1/2</div>
<div class="a" style="left:1323.04px;top:723.33px;font-size:8.2px;line-height:10.66px;color:#5f7281;width:40px;text-align:center">1/3</div>
<div class="a" style="left:1347.22px;top:723.33px;font-size:8.2px;line-height:10.66px;color:#5f7281;width:40px;text-align:center">1/4</div>
<div class="a" style="left:1371.40px;top:723.33px;font-size:8.2px;line-height:10.66px;color:#5f7281;width:40px;text-align:center">1/5</div>
<div class="a" style="left:1395.58px;top:723.33px;font-size:8.2px;line-height:10.66px;color:#5f7281;width:40px;text-align:center">1/6</div>
<div class="a" style="left:1419.76px;top:723.33px;font-size:8.2px;line-height:10.66px;color:#5f7281;width:40px;text-align:center">1/7</div>
<div class="a" style="left:1443.94px;top:723.33px;font-size:8.2px;line-height:10.66px;color:#5f7281;width:40px;text-align:center">1/8</div>
<div class="a" style="left:1468.12px;top:723.33px;font-size:8.2px;line-height:10.66px;color:#5f7281;width:40px;text-align:center">1/9</div>
<div class="a" style="left:1492.30px;top:723.33px;font-size:8.2px;line-height:10.66px;color:#5f7281;width:40px;text-align:center">1/10</div>
<div class="a" style="left:1516.48px;top:723.33px;font-size:8.2px;line-height:10.66px;color:#5f7281;width:40px;text-align:center">1/11</div>
<div class="a" style="left:1540.66px;top:723.33px;font-size:8.2px;line-height:10.66px;color:#5f7281;width:40px;text-align:center">1/12</div>
<div class="a" style="left:1564.84px;top:723.33px;font-size:8.2px;line-height:10.66px;color:#5f7281;width:40px;text-align:center">1/13</div>
<div class="a" style="left:1589.02px;top:723.33px;font-size:8.2px;line-height:10.66px;color:#5f7281;width:40px;text-align:center">1/14</div>
<div class="a" style="left:1613.20px;top:723.33px;font-size:8.2px;line-height:10.66px;color:#5f7281;width:40px;text-align:center">1/15</div>
<div class="a" style="left:1637.38px;top:723.33px;font-size:8.2px;line-height:10.66px;color:#5f7281;width:40px;text-align:center">1/16</div>
<div class="a" style="left:1661.56px;top:723.33px;font-size:8.2px;line-height:10.66px;color:#5f7281;width:40px;text-align:center">1/17</div>
<div class="a" style="left:1685.74px;top:723.33px;font-size:8.2px;line-height:10.66px;color:#5f7281;width:40px;text-align:center">1/18</div>
<div class="a" style="left:1709.92px;top:723.33px;font-size:8.2px;line-height:10.66px;color:#5f7281;width:40px;text-align:center">1/19</div>
<div class="a" style="left:1734.10px;top:723.33px;font-size:8.2px;line-height:10.66px;color:#5f7281;width:40px;text-align:center">1/20</div>
<svg style="left:0px;top:0px" width="1795" height="928"><path d="M1125.42,713.0 C1133.48,713.0 1141.54,649.50 1149.60,649.50 C1157.66,649.50 1165.72,713.0 1173.78,713.0 M1439.76,713.0 C1447.82,713.0 1455.88,670.10 1463.94,670.10 C1472.00,670.10 1480.06,713.0 1488.12,713.0" fill="none" stroke="#e6889a" stroke-width="1.5"/><path d="M1028.7,713.0 H1754.10" fill="none" stroke="#2c5530" stroke-width="1.8"/></svg>
<div class="a" style="left:972.50px;top:738.53px;font-size:9.5px;line-height:12.35px;color:#1f272d;width:800px;text-align:center"><span style="margin:0 4.1px"><span style="display:inline-block;width:10.8px;height:1.3px;background:#5688d9;margin-right:2.8px;vertical-align:2.1px;opacity:0.85"></span>calculator</span><span style="margin:0 4.1px"><span style="display:inline-block;width:10.8px;height:1.3px;background:#4a9a50;margin-right:2.8px;vertical-align:2.1px;opacity:0.85"></span>check_spelling</span><span style="margin:0 4.1px"><span style="display:inline-block;width:10.8px;height:1.3px;background:#d0782a;margin-right:2.8px;vertical-align:2.1px;opacity:0.85"></span>convert_currency</span><span style="margin:0 4.1px"><span style="display:inline-block;width:10.8px;height:1.3px;background:#d05a6e;margin-right:2.8px;vertical-align:2.1px;opacity:0.85"></span>convert_units</span><span style="margin:0 4.1px"><span style="display:inline-block;width:10.8px;height:1.3px;background:#bad8f7;margin-right:2.8px;vertical-align:2.1px;opacity:0.85"></span>create_calendar_event</span><span style="margin:0 4.1px"><span style="display:inline-block;width:10.8px;height:1.3px;background:#b3e6c0;margin-right:2.8px;vertical-align:2.1px;opacity:0.85"></span>generate_password</span><span style="margin:0 4.1px"><span style="display:inline-block;width:10.8px;height:1.3px;background:#f1d49b;margin-right:2.8px;vertical-align:2.1px;opacity:0.85"></span>get_current_time</span><span style="margin:0 4.1px"><span style="display:inline-block;width:10.8px;height:1.3px;background:#f5cdd6;margin-right:2.8px;vertical-align:2.1px;opacity:0.85"></span>get_definition</span></div>
<div class="a" style="left:972.50px;top:752.53px;font-size:9.5px;line-height:12.35px;color:#1f272d;width:800px;text-align:center"><span style="margin:0 4.1px"><span style="display:inline-block;width:10.8px;height:1.3px;background:#8cb8f5;margin-right:2.8px;vertical-align:2.1px;opacity:0.85"></span>get_news_headlines</span><span style="margin:0 4.1px"><span style="display:inline-block;width:10.8px;height:1.3px;background:#93d69e;margin-right:2.8px;vertical-align:2.1px;opacity:0.85"></span>get_stock_price</span><span style="margin:0 4.1px"><span style="display:inline-block;width:10.8px;height:1.3px;background:#e6b97e;margin-right:2.8px;vertical-align:2.1px;opacity:0.85"></span>get_weather</span><span style="margin:0 4.1px"><span style="display:inline-block;width:10.8px;height:1.3px;background:#e6889a;margin-right:2.8px;vertical-align:2.1px;opacity:0.85"></span>search_documentation</span><span style="margin:0 4.1px"><span style="display:inline-block;width:10.8px;height:1.3px;background:#3d66b0;margin-right:2.8px;vertical-align:2.1px;opacity:0.85"></span>search_web</span><span style="margin:0 4.1px"><span style="display:inline-block;width:10.8px;height:1.3px;background:#2f7a3a;margin-right:2.8px;vertical-align:2.1px;opacity:0.85"></span>send_email</span><span style="margin:0 4.1px"><span style="display:inline-block;width:10.8px;height:1.3px;background:#a94e1f;margin-right:2.8px;vertical-align:2.1px;opacity:0.85"></span>set_reminder</span><span style="margin:0 4.1px"><span style="display:inline-block;width:10.8px;height:1.3px;background:#b3314a;margin-right:2.8px;vertical-align:2.1px;opacity:0.85"></span>sum</span><span style="margin:0 4.1px"><span style="display:inline-block;width:10.8px;height:1.3px;background:#273f80;margin-right:2.8px;vertical-align:2.1px;opacity:0.85"></span>summarize_text</span></div>
<div class="a" style="left:972.50px;top:766.33px;font-size:9.5px;line-height:12.35px;color:#1f272d;width:800px;text-align:center"><span style="margin:0 4.1px"><span style="display:inline-block;width:10.8px;height:1.3px;background:#1f4a24;margin-right:2.8px;vertical-align:2.1px;opacity:0.85"></span>translate_text</span></div>
<div class="a" style="left:138px;top:806px;width:1657px;height:104px;overflow:hidden">
<div class="a" style="left:6.0px;top:10.4px;width:312.6px;height:200px;border:1px solid #e2e6ec;border-radius:6px;background:#fff"></div>
<svg style="left:25.4px;top:32.2px" width="11" height="11" viewBox="0 0 24 24"><path d="M14.7 6.3a1 1 0 0 0 0 1.4l1.6 1.6a1 1 0 0 0 1.4 0l3.77-3.77a6 6 0 0 1-7.94 7.94l-6.91 6.91a2.12 2.12 0 0 1-3-3l6.91-6.91a6 6 0 0 1 7.94-7.94l-3.76 3.76z" fill="none" stroke="#5688d9" stroke-width="2.1" stroke-linecap="round" stroke-linejoin="round"/></svg>
<div class="a" style="left:40.30px;top:30.05px;font-size:13.2px;line-height:17.16px;color:#11171c;font-weight:700">calculator</div>
<div class="a" style="left:25.80px;top:53.75px;font-size:14.3px;line-height:18.59px;color:#11171c;font-weight:700;letter-spacing:0.284px">0.00%</div>
<div class="a" style="left:71.30px;top:57.83px;font-size:9.5px;line-height:12.35px;color:#5f7281;letter-spacing:0.280px">overall error rate</div>
<div class="a" style="left:35.70px;top:92.23px;font-size:7.8px;line-height:10.14px;color:#5f7281">100%</div>
<div class="a" style="left:337.35px;top:10.4px;width:312.6px;height:200px;border:1px solid #e2e6ec;border-radius:6px;background:#fff"></div>
<svg style="left:356.75px;top:32.2px" width="11" height="11" viewBox="0 0 24 24"><path d="M14.7 6.3a1 1 0 0 0 0 1.4l1.6 1.6a1 1 0 0 0 1.4 0l3.77-3.77a6 6 0 0 1-7.94 7.94l-6.91 6.91a2.12 2.12 0 0 1-3-3l6.91-6.91a6 6 0 0 1 7.94-7.94l-3.76 3.76z" fill="none" stroke="#4a9a50" stroke-width="2.1" stroke-linecap="round" stroke-linejoin="round"/></svg>
<div class="a" style="left:371.65px;top:30.05px;font-size:13.2px;line-height:17.16px;color:#11171c;font-weight:700">check_spelling</div>
<div class="a" style="left:357.15px;top:53.75px;font-size:14.3px;line-height:18.59px;color:#11171c;font-weight:700;letter-spacing:0.284px">0.00%</div>
<div class="a" style="left:402.65px;top:57.83px;font-size:9.5px;line-height:12.35px;color:#5f7281;letter-spacing:0.280px">overall error rate</div>
<div class="a" style="left:367.05px;top:92.23px;font-size:7.8px;line-height:10.14px;color:#5f7281">100%</div>
<div class="a" style="left:668.7px;top:10.4px;width:312.6px;height:200px;border:1px solid #e2e6ec;border-radius:6px;background:#fff"></div>
<svg style="left:688.1px;top:32.2px" width="11" height="11" viewBox="0 0 24 24"><path d="M14.7 6.3a1 1 0 0 0 0 1.4l1.6 1.6a1 1 0 0 0 1.4 0l3.77-3.77a6 6 0 0 1-7.94 7.94l-6.91 6.91a2.12 2.12 0 0 1-3-3l6.91-6.91a6 6 0 0 1 7.94-7.94l-3.76 3.76z" fill="none" stroke="#d0782a" stroke-width="2.1" stroke-linecap="round" stroke-linejoin="round"/></svg>
<div class="a" style="left:703.00px;top:30.05px;font-size:13.2px;line-height:17.16px;color:#11171c;font-weight:700">convert_currency</div>
<div class="a" style="left:688.50px;top:53.75px;font-size:14.3px;line-height:18.59px;color:#11171c;font-weight:700;letter-spacing:0.284px">0.00%</div>
<div class="a" style="left:734.00px;top:57.83px;font-size:9.5px;line-height:12.35px;color:#5f7281;letter-spacing:0.280px">overall error rate</div>
<div class="a" style="left:698.40px;top:92.23px;font-size:7.8px;line-height:10.14px;color:#5f7281">100%</div>
<div class="a" style="left:1000.0500000000002px;top:10.4px;width:312.6px;height:200px;border:1px solid #e2e6ec;border-radius:6px;background:#fff"></div>
<svg style="left:1019.4500000000002px;top:32.2px" width="11" height="11" viewBox="0 0 24 24"><path d="M14.7 6.3a1 1 0 0 0 0 1.4l1.6 1.6a1 1 0 0 0 1.4 0l3.77-3.77a6 6 0 0 1-7.94 7.94l-6.91 6.91a2.12 2.12 0 0 1-3-3l6.91-6.91a6 6 0 0 1 7.94-7.94l-3.76 3.76z" fill="none" stroke="#d05a6e" stroke-width="2.1" stroke-linecap="round" stroke-linejoin="round"/></svg>
<div class="a" style="left:1034.35px;top:30.05px;font-size:13.2px;line-height:17.16px;color:#11171c;font-weight:700">convert_units</div>
<div class="a" style="left:1019.85px;top:53.75px;font-size:14.3px;line-height:18.59px;color:#11171c;font-weight:700;letter-spacing:0.284px">0.00%</div>
<div class="a" style="left:1065.35px;top:57.83px;font-size:9.5px;line-height:12.35px;color:#5f7281;letter-spacing:0.280px">overall error rate</div>
<div class="a" style="left:1029.75px;top:92.23px;font-size:7.8px;line-height:10.14px;color:#5f7281">100%</div>
<div class="a" style="left:1331.4px;top:10.4px;width:312.6px;height:200px;border:1px solid #e2e6ec;border-radius:6px;background:#fff"></div>
<svg style="left:1350.8000000000002px;top:32.2px" width="11" height="11" viewBox="0 0 24 24"><path d="M14.7 6.3a1 1 0 0 0 0 1.4l1.6 1.6a1 1 0 0 0 1.4 0l3.77-3.77a6 6 0 0 1-7.94 7.94l-6.91 6.91a2.12 2.12 0 0 1-3-3l6.91-6.91a6 6 0 0 1 7.94-7.94l-3.76 3.76z" fill="none" stroke="#a9cdf5" stroke-width="2.1" stroke-linecap="round" stroke-linejoin="round"/></svg>
<div class="a" style="left:1365.70px;top:30.05px;font-size:13.2px;line-height:17.16px;color:#11171c;font-weight:700">create_calendar_event</div>
<div class="a" style="left:1351.20px;top:53.75px;font-size:14.3px;line-height:18.59px;color:#11171c;font-weight:700;letter-spacing:0.284px">0.00%</div>
<div class="a" style="left:1396.70px;top:57.83px;font-size:9.5px;line-height:12.35px;color:#5f7281;letter-spacing:0.280px">overall error rate</div>
<div class="a" style="left:1361.10px;top:92.23px;font-size:7.8px;line-height:10.14px;color:#5f7281">100%</div>
</div>
</div></body></html>
